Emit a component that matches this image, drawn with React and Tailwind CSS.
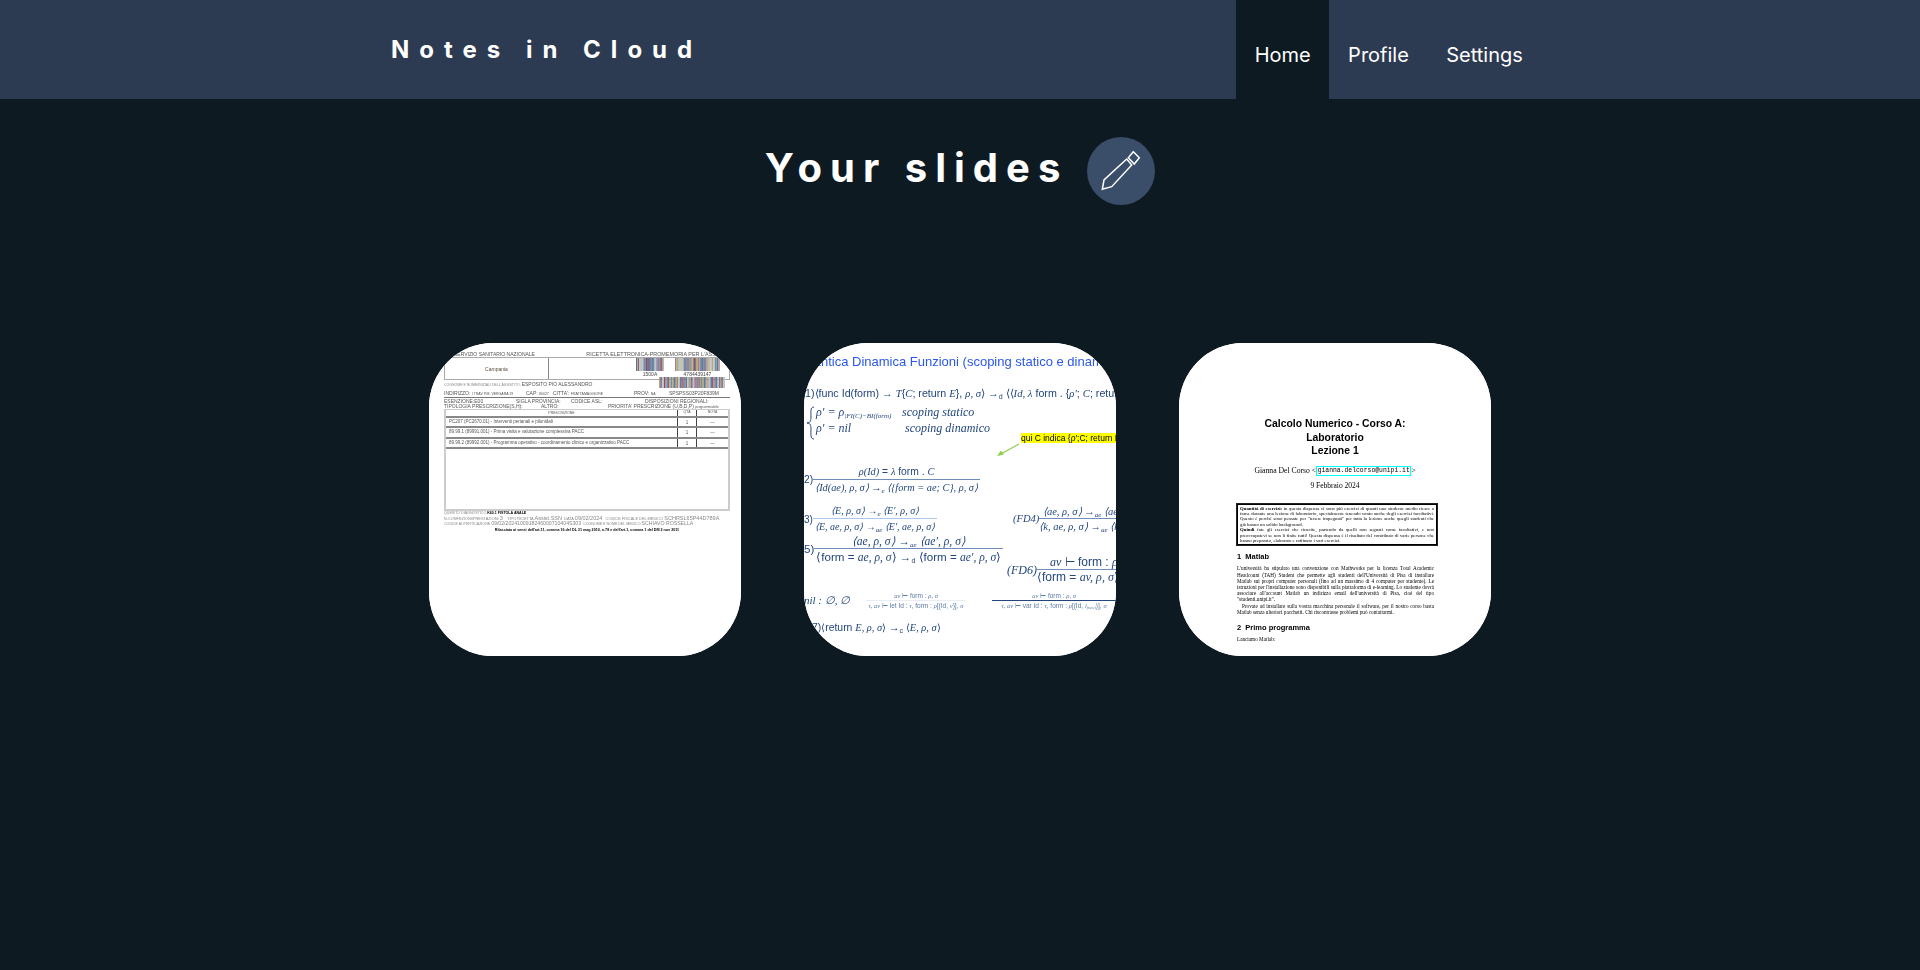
const INK = "text-[#23467f]";

function Barcode({ w, h, seed = 1 }) {
  const cols = ["#7b6a8c", "#b9a56e", "#5c7f9c", "#8fb09a", "#8d4f6a", "#c2c2c2", "#3f4a6b", "#a97f86", "#6e8fa8"];
  const bars = [];
  let x = 0;
  let s = seed * 7 + 3;
  while (x < w) {
    s = (s * 37 + 11) % 101;
    const bw = 0.7 + (s % 3) * 0.5;
    bars.push(<rect key={x} x={x} y={0} width={bw} height={h} fill={cols[s % cols.length]} />);
    x += bw;
  }
  return <svg width={w} height={h} className="block shrink-0">{bars}</svg>;
}

function Row({ children }) {
  return (
    <div className="flex h-[10.5px] items-center border-b-2 border-[#888]">
      <div className="flex-1 pl-[3px]">{children}</div>
      <div className="w-[19px] border-l border-[#444] h-full text-center">1</div>
      <div className="w-[32px] border-l border-[#444] h-full text-center">—</div>
    </div>
  );
}

function Prescription() {
  return (
    <div className="h-full bg-white font-['Liberation_Sans',sans-serif] text-[5px] leading-[6px] text-[#555] pt-[8px] pl-[15px] pr-[11px] blur-[0.3px]">
      <div className="flex justify-between whitespace-nowrap pl-[10px] -mr-[3px] overflow-hidden">
        <span>SERVIZIO SANITARIO NAZIONALE</span>
        <span className="text-[5.4px]">RICETTA ELETTRONICA-PROMEMORIA PER L'ASSISTITO</span>
      </div>
      <div className="flex h-[22px] border border-[#aaa] border-b-0">
        <div className="w-[104px] border-r border-[#888] flex items-center justify-center text-[#5b4a3a]">Campania</div>
        <div className="flex-1 flex justify-end gap-[11px] pr-[9px]">
          <div><Barcode w={28} h={13} seed={1} /><div className="text-center text-[#444]">1500A</div></div>
          <div><Barcode w={45} h={13} seed={2} /><div className="text-center text-[#444]">4784439147</div></div>
        </div>
      </div>
      <div className="flex justify-between h-[11px] items-start whitespace-nowrap border-t border-[#aaa] pr-[5px]">
        <div className="pt-[1px]"><span className="text-[3.5px] text-[#888]">COGNOME E NOME/INIZIALI DELL'ASSISTITO: </span>ESPOSITO PIO ALESSANDRO</div>
        <div className="-mt-[3px]"><Barcode w={66} h={11} seed={3} /></div>
      </div>
      <div className="flex whitespace-nowrap h-[8px] border-b border-[#777]">
        <span className="w-[82px] shrink-0">INDIRIZZO: <span className="text-[3.5px]">I TRAV P.M. VERGARA 19</span></span>
        <span className="w-[27px] shrink-0">CAP: <span className="text-[3.5px]">80027</span></span>
        <span className="w-[81px] shrink-0">CITTA': <span className="text-[3.5px]">FRATTAMAGGIORE</span></span>
        <span className="w-[35px] shrink-0">PROV: <span className="text-[3.5px]">NA</span></span>
        <span>SPSPSS03P20F839M</span>
      </div>
      <div className="whitespace-nowrap leading-[5px] pt-[1px]">
        <div className="flex">
          <span className="w-[72px] shrink-0">ESENZIONE:E00</span>
          <span className="w-[55px] shrink-0">SIGLA PROVINCIA:</span>
          <span className="w-[74px] shrink-0">CODICE ASL:</span>
          <span>DISPOSIZIONI REGIONALI:</span>
        </div>
        <div className="flex">
          <span className="w-[97px] shrink-0">TIPOLOGIA PRESCRIZIONE(S,H):</span>
          <span className="w-[67px] shrink-0">ALTRO:</span>
          <span>PRIORITA' PRESCRIZIONE (U,B,D,P) <span className="text-[3.5px]">programmabile</span></span>
        </div>
      </div>
      <div className="border-2 border-t border-[#ccc] h-[102px] -mt-[1px] text-[4.5px] leading-[10px]">
        <div className="flex h-[7.5px] items-center border-b-2 border-[#888] text-[3.5px] leading-[4px] text-center">
          <div className="flex-1">PRESCRIZIONE</div><div className="w-[19px] border-l border-[#444] h-full">QTA</div><div className="w-[32px] border-l border-[#444] h-full">NOTA</div>
        </div>
        <Row>PC207 (PC2670.01) - Interventi perianali e pilonidali</Row>
        <Row>89.99.1 (89991.001) - Prima visita e valutazione complessiva PACC</Row>
        <Row>89.99.2 (89992.001) - Programma operativo - coordinamento clinico e organizzativo PACC</Row>
      </div>
      <div className="whitespace-nowrap text-[#888]">
        <div className="text-[3.6px] leading-[5px]">QUESITO DIAGNOSTICO <span className="text-black font-bold">K60.1 FISTOLA ANALE</span></div>
        <div className="text-[3.9px] leading-[5px]">N.CONFEZIONI/PRESTAZIONI <span className="text-[5.5px]">3</span> &nbsp; &nbsp;TIPO RICETTA <span className="text-[5.5px]">Assist.SSN</span> &nbsp;DATA <span className="text-[5.5px]">09/02/2024</span> &nbsp; CODICE FISCALE DEL MEDICO <span className="text-[5.5px]">SCHRSL65P44D789A</span></div>
        <div className="text-[3.6px] leading-[5px]">CODICE AUTENTICAZIONE <span className="text-[5.2px]">09/02/2024100918246000710404S303</span> &nbsp;COGNOME E NOME DEL MEDICO <span className="text-[5.2px]">SCHIAVO ROSSELLA</span></div>
        <div className="text-center text-black font-bold pt-[1px] text-[3.7px] leading-[5px]">Rilasciata ai sensi dell'art.11, comma 16 del DL 31 mag 2010, n.78 e dell'art.1, comma 1 del DM 2 nov 2011</div>
      </div>
    </div>
  );
}

const Math = ({ children, className = "" }) => (
  <span className={`font-['Liberation_Serif',serif] italic ${className}`}>{children}</span>
);

function Frac({ top, bottom, lead, className = "", lineClass = "border-[#6f8fb8]" }) {
  return (
    <div className={`flex items-center whitespace-nowrap ${className}`}>
      {lead && <span className="shrink-0">{lead}</span>}
      <div className="flex flex-col items-stretch text-center">
        <div className={`border-b ${lineClass} leading-[14px] h-[15px]`}>{top}</div>
        <div className="leading-[15px] h-[15px]">{bottom}</div>
      </div>
    </div>
  );
}

function Semantics() {
  return (
    <div className={`h-full w-[312px] overflow-hidden bg-white font-['Liberation_Sans',sans-serif] text-[12px] ${INK} whitespace-nowrap blur-[0.25px]`}>
      <div className="text-[#2a57e8] text-[13px] leading-[16px] pt-[11px] -ml-[17px]">Semantica Dinamica Funzioni (scoping statico e dinamico)</div>
      <div className="mt-[15px] text-[10.7px] leading-[16px] pl-[1px]">
        1)⟨func Id(form) → <Math>T</Math>{"{"}<Math>C</Math>; return <Math>E</Math>{"}"}, <Math>ρ, σ</Math>⟩ →<sub className="text-[7px]">d</sub> ⟨⟨<Math>Id, λ</Math> form . {"{"}<Math>ρ′</Math>; <Math>C</Math>; return
      </div>
      <div className="flex mt-[3px] pl-[2px] text-[12px]">
        <svg width="9" height="34" viewBox="0 0 9 34" fill="none" stroke="#23467f" className="shrink-0 mt-[2px]"><path d="M8 1C4 1 5 6 5 11C5 15 4 17 1 17C4 17 5 19 5 23C5 28 4 33 8 33" /></svg>
        <div className="pl-[1px]">
          <div className="flex h-[16px] leading-[16px]"><Math className="w-[86px]">ρ′ = ρ<sub className="text-[7px]">|FI(C)−BI(form)</sub></Math><Math>scoping statico</Math></div>
          <div className="flex h-[16px] leading-[16px]"><Math className="w-[89px]">ρ′ = nil</Math><Math>scoping dinamico</Math></div>
        </div>
      </div>
      <div className="flex justify-end -mt-[7px] h-[10px]">
        <span className="bg-[#ffff00] text-black text-[8.5px] leading-[10px] w-[95px] overflow-hidden">qui C indica {"{"}ρ′;C; return E{"}"}</span>
      </div>
      <svg width="26" height="16" viewBox="0 0 26 16" fill="none" className="block ml-[192px]"><path d="M23 1L3 12" stroke="#92d050" strokeWidth="1.2" /><path d="M1 13L8 11.5L5 7.5Z" fill="#92d050" /></svg>
      <Frac className="mt-[6px] text-[10.3px]" lead="2)" top={<span><Math>ρ(Id)</Math> = <Math>λ</Math> form . <Math>C</Math></span>} bottom={<Math className="px-[2px]">⟨Id(ae), ρ, σ⟩ →<sub className="text-[7px]">e</sub> ⟨{"{"}form = ae; C{"}"}, ρ, σ⟩</Math>} />
      <div className="flex justify-between mt-[9px]">
        <div>
          <Frac className="text-[10px]" lead="3)" lineClass="border-[#a9c8ea]" top={<Math>⟨E, ρ, σ⟩ →<sub className="text-[7px]">e</sub> ⟨E′, ρ, σ⟩</Math>} bottom={<Math className="px-[2px]">⟨E, ae, ρ, σ⟩ →<sub className="text-[7px]">ae</sub> ⟨E′, ae, ρ, σ⟩</Math>} />
          <Frac className="text-[11.6px]" lead="5)" top={<Math>⟨ae, ρ, σ⟩ →<sub className="text-[7px]">ae</sub> ⟨ae′, ρ, σ⟩</Math>} bottom={<span className="px-[2px]">⟨form = <Math>ae, ρ, σ</Math>⟩ →<sub className="text-[7px]">d</sub> ⟨form = <Math>ae′, ρ, σ</Math>⟩</span>} />
        </div>
        <div className="w-[103px] text-[10.5px] overflow-hidden self-start">
          <Frac lead={<Math>(FD4)</Math>} top={<Math>⟨ae, ρ, σ⟩ →<sub className="text-[7px]">ae</sub> ⟨ae</Math>} bottom={<Math>⟨k, ae, ρ, σ⟩ →<sub className="text-[7px]">ae</sub> ⟨k,</Math>} />
        </div>
      </div>
      <div className="flex justify-end -mt-[9px]">
        <div className="w-[109px] text-[12px] overflow-hidden">
          <Frac lead={<Math>(FD6)</Math>} top={<span><Math>av</Math> ⊢ form : <Math>ρ<sub className="text-[7px]">0</sub></Math></span>} bottom={<span>⟨form = <Math>av, ρ, σ</Math>⟩ →</span>} />
        </div>
      </div>
      <div className="flex items-center text-[6.5px] mt-[6px]">
        <Math className="text-[11px] w-[62px]">nil : ∅, ∅</Math>
        <div className="w-[100px] text-center leading-[9px] text-[#5b7aa5]">
          <div className="border-b border-[#e8edf5]"><Math>av</Math> ⊢ form : <Math>ρ, σ</Math></div>
          <div><Math>τ, av</Math> ⊢ let Id : <Math>τ</Math>, form : <Math>ρ</Math>[(Id, <Math>v</Math>)], <Math>σ</Math></div>
        </div>
        <div className="ml-[26px] w-[124px] shrink-0 text-center leading-[9px] text-[#5b7aa5] overflow-hidden">
          <div className="border-b border-[#23467f]"><Math>av</Math> ⊢ form : <Math>ρ, σ</Math></div>
          <div><Math>τ, av</Math> ⊢ var Id : <Math>τ</Math>, form : <Math>ρ</Math>[(Id, <Math>l<sub className="text-[4px]">(new)</sub></Math>)], <Math>σ</Math></div>
        </div>
      </div>
      <div className="mt-[10px] text-[10.4px] pl-[8px] leading-[16px]">
        7)⟨return <Math>E, ρ, σ</Math>⟩ →<sub className="text-[7px]">c</sub> ⟨<Math>E, ρ, σ</Math>⟩
      </div>
    </div>
  );
}

function LatexDoc() {
  return (
    <div className="h-full bg-white font-['Liberation_Serif',serif] text-black pt-[74px] blur-[0.25px]">
      <div className="text-center font-['Liberation_Sans',sans-serif] font-bold text-[10.4px] leading-[13.5px]">
        <div>Calcolo Numerico - Corso A:</div>
        <div>Laboratorio</div>
        <div>Lezione 1</div>
      </div>
      <div className="text-center text-[7.7px] leading-[10px] mt-[8px] flex justify-center items-center whitespace-nowrap">
        Gianna Del Corso &lt;
        <span className="font-['Liberation_Mono',monospace] text-[6.4px] leading-[8px] border border-[#00ffff] px-[0.5px]">gianna.delcorso@unipi.it</span>
        &gt;
      </div>
      <div className="text-center text-[7.5px] leading-[10px] mt-[5px]">9 Febbraio 2024</div>
      <div className="ml-[58px] mr-[54px] mt-[13px] border border-black outline outline-[0.5px] outline-[#222] px-[2px] py-[1px] text-[4.8px] leading-[5.4px] text-justify">
        <div><b>Quantità di esercizi:</b> in questa dispensa ci sono più esercizi di quanti uno studente medio riesce a farne durante una lezione di laboratorio, specialmente tenendo conto anche degli esercizi facoltativi. Questo è perché sono pensate per "tenere impegnati" per tutta la lezione anche quegli studenti che già hanno un solido background.</div>
        <div><b>Quindi</b> fate gli esercizi che riuscite, partendo da quelli non segnati come facoltativi, e non preoccupatevi se non li finite tutti! Questa dispensa è il risultato del contributo di varie persone che hanno preparato, elaborato e raffinato i vari esercizi.</div>
      </div>
      <div className="mx-[58px] mt-[7px] font-['Liberation_Sans',sans-serif] font-bold text-[7.5px] leading-[9px]">1&nbsp;&nbsp;Matlab</div>
      <div className="ml-[58px] mr-[57px] mt-[4px] text-[5.2px] leading-[6.2px] text-justify">
        L'università ha stipulato una convenzione con Mathworks per la licenza Total Academic Headcount (TAH) Student che permette agli studenti dell'Università di Pisa di installare Matlab sui propri computer personali (fino ad un massimo di 4 computer per studente). Le istruzioni per l'installazione sono disponibili sulla piattaforma di e-learning. Lo studente dovrà associare all'account Matlab un indirizzo email dell'università di Pisa, cioè del tipo "studenti.unipi.it".
        <div className="indent-[5px]">Provate ad installare sulla vostra macchina personale il software, per il nostro corso basta Matlab senza ulteriori pacchetti. Chi riscontrasse problemi può contattarmi.</div>
      </div>
      <div className="mx-[58px] mt-[8px] font-['Liberation_Sans',sans-serif] font-bold text-[7.5px] leading-[9px]">2&nbsp;&nbsp;Primo programma</div>
      <div className="mx-[58px] mt-[4px] text-[5.2px] leading-[6px]">Lanciamo Matlab:</div>
    </div>
  );
}

function Card({ children }) {
  return <div className="h-[313px] w-[312px] overflow-hidden rounded-[64px] bg-white">{children}</div>;
}

export default function App() {
  return (
    <div className="min-h-[970px] bg-[#0e1a22] font-['Inter',sans-serif] text-white">
      <header className="flex h-[99px] bg-[#2d3b52] pl-[391px]">
        <div className="w-[845px] pt-[35px] text-2xl font-bold leading-[30px] tracking-[10px]">Notes in Cloud</div>
        <nav className="flex text-xl leading-[28px]">
          <a className="bg-[#0e1a22] px-[18.7px] pt-[41px]">Home</a>
          <a className="px-[18.7px] pt-[41px]">Profile</a>
          <a className="px-[18.7px] pt-[41px]">Settings</a>
        </nav>
      </header>
      <main>
        <div className="mt-[38px] flex items-center justify-center gap-[19px]">
          <h1 className="text-[40px] font-bold leading-[60px] tracking-[0.2em] -mt-[6px]">Your slides</h1>
          <button className="flex size-[68px] items-center justify-center rounded-full bg-[#3a4d69]">
            <svg width="40" height="40" viewBox="0 0 40 40" fill="none" stroke="white" strokeWidth="1.5">
              <path d="M1.3 38.3L3 29L25.7 8L30.7 14L10.7 35.7Z" />
              <path d="M27.3 6.7L32.3 0.7L38.3 6.7L33.3 13Z" />
            </svg>
          </button>
        </div>
        <div className="mt-[138px] flex justify-center gap-[63px]">
          <Card><Prescription /></Card>
          <Card><Semantics /></Card>
          <Card><LatexDoc /></Card>
        </div>
      </main>
    </div>
  );
}
